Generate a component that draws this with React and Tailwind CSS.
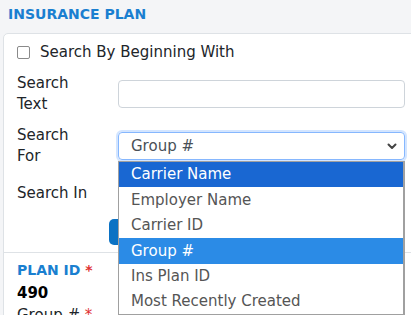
const options = [
  { label: "Carrier Name", tone: "bg-[#1967d2] text-white" },
  { label: "Employer Name", tone: "text-[#555]" },
  { label: "Carrier ID", tone: "text-[#555]" },
  { label: "Group #", tone: "bg-[#2b8be6] text-white" },
  { label: "Ins Plan ID", tone: "text-[#555]" },
  { label: "Most Recently Created", tone: "text-[#555]" },
];

const App = () => {
  return (
    <div
      className="w-[411px] h-[315px] overflow-hidden bg-[#f4f5f7] text-[#212529]"
      style={{ fontFamily: '"DejaVu Sans", "Noto Sans", sans-serif' }}
    >
      <h2 className="pl-2 pt-[4px] h-[33px] text-[14px] font-bold text-[#1a7fd0]">
        INSURANCE PLAN
      </h2>
      <div className="ml-[3px] w-[430px] bg-white border border-[#dee2e6] rounded-[5px]">
        <div className="px-[13px] pt-[8px]">
          <label className="flex items-center gap-[10px] h-[20px] text-[15px]">
            <span className="w-[13px] h-[13px] border border-[#8a8a8a] rounded-[2px] bg-white" />
            Search By Beginning With
          </label>

          <div className="flex items-center mt-[11px]">
            <span className="w-[101px] text-[15px] leading-[21px]">Search<br />Text</span>
            <div className="w-[287px] h-[28px] border border-[#ced4da] rounded-[4px]" />
          </div>

          <div className="flex items-center mt-[10px]">
            <span className="w-[101px] text-[15px] leading-[21px]">Search<br />For</span>
            <div className="relative w-[287px]">
              <div className="h-[28px] flex items-center justify-between pl-[12px] pr-[7px] border border-[#86b7fe] rounded-[4px] shadow-[0_0_0_2px_rgba(13,110,253,0.18)] text-[15px] font-medium text-[#495057]">
                Group #
                <svg width="10" height="7" viewBox="0 0 10 7">
                  <path d="M1.5 1.5 L5 5 L8.5 1.5" fill="none" stroke="#444" strokeWidth="2" strokeLinecap="round" strokeLinejoin="round" />
                </svg>
              </div>
              <ul className="absolute z-10 left-0 top-[29px] w-[287px] bg-white border border-[#a0a0a0] border-r-2 border-b-2 text-[15px]">
                {options.map((o) => (
                  <li key={o.label} className={`h-[25.4px] flex items-center pl-[12px] ${o.tone}`}>
                    {o.label}
                  </li>
                ))}
              </ul>
            </div>
          </div>

          <div className="flex items-center mt-[16px] h-[20px] text-[15px]">Search In</div>

          <div className="mt-[16px] ml-[92px] w-[80px] h-[26px] rounded-[5px] bg-[#0b72c4]" />
        </div>

        <div className="mt-[7px] border-t border-[#dee2e6] px-[13px] pt-[7px]">
          <div className="text-[14px] font-bold text-[#1a7fd0] h-[22px]">
            PLAN ID <span className="text-[#e03131]">*</span>
          </div>
          <div className="text-[15px] font-bold text-black h-[22px]">490</div>
          <div className="text-[15px] h-[22px]">
            Group # <span className="text-[#e03131]">*</span>
          </div>
        </div>
      </div>
    </div>
  );
};

export default App;
